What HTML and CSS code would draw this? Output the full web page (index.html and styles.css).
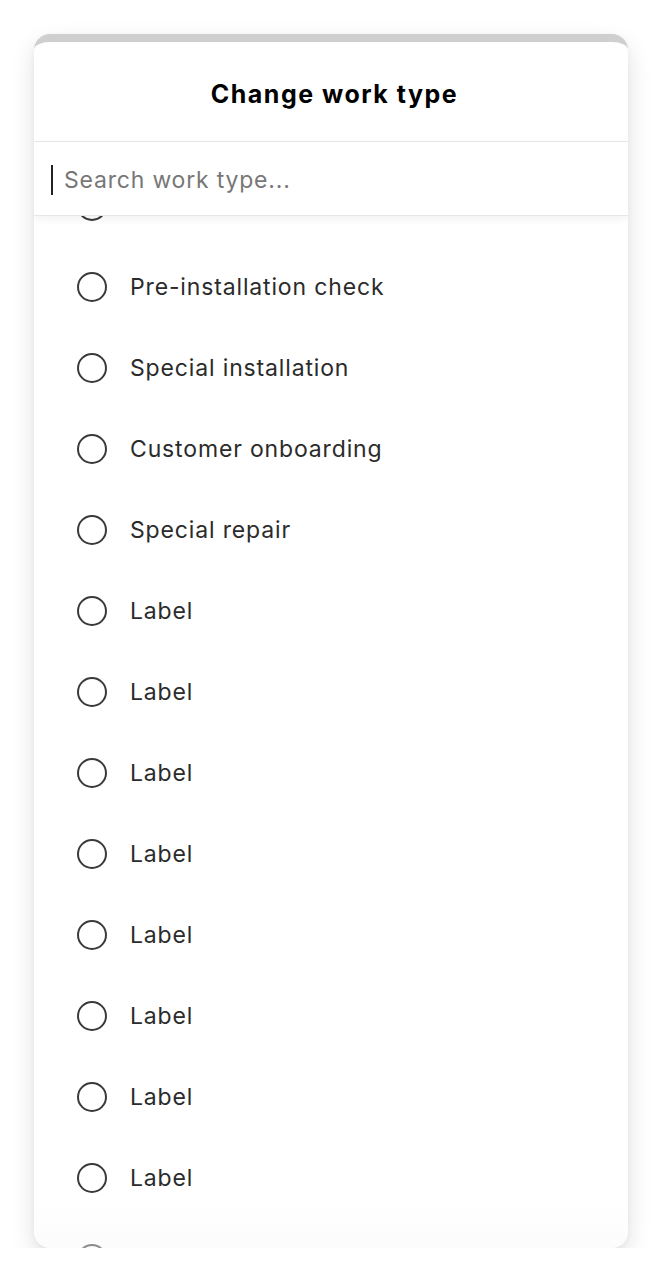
FILE: index.html
```html
<!DOCTYPE html>
<html lang="en">
<head>
<meta charset="utf-8">
<title>Change work type</title>
<link rel="stylesheet" href="styles.css">
</head>
<body>
<div class="sheet">
  <header class="sheet-header">
    <h1 class="sheet-title">Change work type</h1>
  </header>
  <div class="search">
    <span class="caret"></span>
    <span class="placeholder">Search work type...</span>
  </div>
  <div class="list-viewport">
    <ul class="list">
      <li class="item"><span class="radio"></span><span class="label">Installation</span></li>
      <li class="item"><span class="radio"></span><span class="label">Pre-installation check</span></li>
      <li class="item"><span class="radio"></span><span class="label">Special installation</span></li>
      <li class="item"><span class="radio"></span><span class="label">Customer onboarding</span></li>
      <li class="item"><span class="radio"></span><span class="label">Special repair</span></li>
      <li class="item"><span class="radio"></span><span class="label">Label</span></li>
      <li class="item"><span class="radio"></span><span class="label">Label</span></li>
      <li class="item"><span class="radio"></span><span class="label">Label</span></li>
      <li class="item"><span class="radio"></span><span class="label">Label</span></li>
      <li class="item"><span class="radio"></span><span class="label">Label</span></li>
      <li class="item"><span class="radio"></span><span class="label">Label</span></li>
      <li class="item"><span class="radio"></span><span class="label">Label</span></li>
      <li class="item"><span class="radio"></span><span class="label">Label</span></li>
      <li class="item"><span class="radio"></span><span class="label">Label</span></li>
    </ul>
    <div class="fade"></div>
  </div>
</div>
</body>
</html>
```

FILE: styles.css
```css
html, body {
  margin: 0;
  padding: 0;
  background: #ffffff;
}

body {
  font-family: "Inter", "Liberation Sans", sans-serif;
  padding: 34px 34px 0 34px;
}

.sheet {
  width: 594px;
  height: 1214px;
  box-sizing: border-box;
  border-top: 8px solid #cfcfcf;
  border-radius: 16px;
  background: #ffffff;
  box-shadow: 0 10px 24px rgba(0, 0, 0, 0.12), 0 2px 6px rgba(0, 0, 0, 0.04);
  display: flex;
  flex-direction: column;
  overflow: hidden;
}

.sheet-header {
  height: 100px;
  border-bottom: 1px solid #e8e8e8;
  display: flex;
  align-items: center;
  justify-content: center;
  padding: 4px 0 0 7px;
  box-sizing: border-box;
  flex: none;
}

.sheet-title {
  margin: 0;
  font-size: 25px;
  font-weight: 700;
  color: #000000;
  letter-spacing: 1.5px;
}

.search {
  height: 74px;
  box-sizing: border-box;
  border-bottom: 1px solid #e6e6e6;
  display: flex;
  align-items: center;
  padding: 2px 0 0 17px;
  gap: 11px;
  position: relative;
  z-index: 2;
  background: #ffffff;
  box-shadow: 0 3px 8px rgba(0, 0, 0, 0.06);
  flex: none;
}

.caret {
  width: 2px;
  height: 30px;
  background: #222222;
}

.placeholder {
  font-size: 23px;
  letter-spacing: 0.8px;
  color: #777777;
}

.list-viewport {
  flex: 1;
  overflow: hidden;
  position: relative;
}

.list {
  list-style: none;
  margin: -51px 0 0 0;
  padding: 0;
}

.item {
  height: 81px;
  display: flex;
  align-items: center;
  padding-left: 43px;
  gap: 23px;
}

.radio {
  width: 30px;
  height: 30px;
  box-sizing: border-box;
  border: 2px solid #3a3a3a;
  border-radius: 50%;
  flex: none;
}

.label {
  font-size: 23px;
  letter-spacing: 0.85px;
  color: #2b2b2b;
}

.fade {
  position: absolute;
  left: 0;
  right: 0;
  bottom: 0;
  height: 50px;
  background: linear-gradient(to bottom, rgba(255, 255, 255, 0), rgba(248, 248, 248, 0.45));
}
```
